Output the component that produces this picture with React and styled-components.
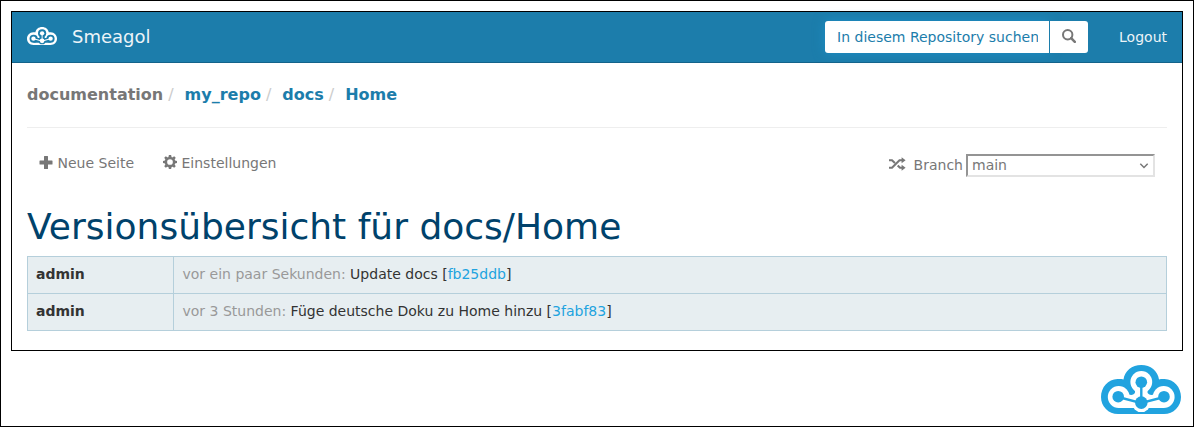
import React from 'react';
import styled, { createGlobalStyle } from 'styled-components';

const Global = createGlobalStyle`
  * { box-sizing: border-box; }
  body {
    margin: 0;
    background: #fff;
    color: #333;
    font: 14px/20px "DejaVu Sans", sans-serif;
  }
`;

const Page = styled.div`
  display: flex;
  flex-direction: column;
  width: 1194px;
  height: 427px;
  padding: 10px;
  border: 1px solid #000;
`;

const Frame = styled.section`
  width: 1172px;
  height: 340px;
  border: 1px solid #000;
`;

const Navbar = styled.header`
  display: flex;
  align-items: center;
  height: 51px;
  padding: 0 15px;
  background: #1c7dab;
  border-bottom: 1px solid #14638a;
  color: #ecf4f8;
`;

const Brand = styled.a`
  display: flex;
  align-items: center;
  gap: 15px;
  margin-right: auto;
  font-size: 18px;
  svg { margin-bottom: 2px; }
`;

const SearchForm = styled.div`
  display: flex;
  width: 263px;
  height: 32px;
  margin-right: 31px;
`;

const SearchInput = styled.input`
  width: 224px;
  padding: 0 11px 0 12px;
  border: 0;
  border-radius: 3px 0 0 3px;
  outline: 0;
  background: #fff;
  box-shadow: 0 0 12px rgba(30, 150, 210, 0.65);
  font: inherit;
  &::placeholder { color: #1c7dab; opacity: 1; }
`;

const SearchButton = styled.button`
  display: flex;
  flex: 1;
  align-items: center;
  justify-content: center;
  padding: 0 0 2px;
  border: 0;
  border-left: 1px solid #1c7dab;
  border-radius: 0 3px 3px 0;
  background: #fff;
  color: #777;
`;

const Content = styled.main`
  padding: 0 15px;
`;

const Breadcrumb = styled.nav`
  display: flex;
  height: 65px;
  padding-top: 21px;
  border-bottom: 1px solid #eee;
  font-size: 16px;
  line-height: 22px;
  font-weight: bold;
`;

const Crumb = styled.span`
  color: ${(p) => (p.$muted ? '#777' : '#1c7dab')};
  &:not(:first-child)::before {
    content: '/';
    padding: 0 11px 0 5px;
    color: #ccc;
    font-weight: normal;
  }
`;

const Toolbar = styled.div`
  display: flex;
  height: 77px;
  padding: 25px 12px 0 11.5px;
  color: #777;
`;

const Action = styled.a`
  display: flex;
  align-items: flex-start;
  gap: 5px;
  margin-right: 28.5px;
  svg { margin-top: 2px; }
`;

const BranchPicker = styled.label`
  display: flex;
  height: 25px;
  margin-left: auto;
`;

const BranchIcon = styled.span`
  display: flex;
  padding-top: 4px;
`;

const BranchName = styled.span`
  margin: 2px 3px 0 8px;
`;

const SelectWrap = styled.span`
  position: relative;
  height: 24px;
  padding-top: 1px;
  svg {
    position: absolute;
    top: 10px;
    right: 6px;
    pointer-events: none;
  }
`;

const BranchSelect = styled.select`
  display: block;
  width: 189px;
  height: 23px;
  padding: 0 4px 1px;
  border: 2px solid;
  border-color: #949494 #e3e3e3 #e3e3e3 #949494;
  border-radius: 0;
  appearance: none;
  background-color: #fff;
  color: #777;
  font: inherit;
  line-height: 18px;
`;

const Title = styled.h1`
  margin: 0;
  height: 51px;
  padding-top: 2px;
  color: #00426b;
  font-size: 36px;
  font-weight: normal;
  line-height: 40px;
`;

const History = styled.table`
  width: 1140px;
  border-collapse: collapse;
  table-layout: fixed;
  background: #e7eef1;
`;

const Cell = styled.td`
  width: ${(p) => (p.$author ? '146px' : 'auto')};
  height: 37px;
  padding: ${(p) => (p.$author ? '0 8px 3px' : '0 8px 3px 8.5px')};
  border: 1px solid #b5cfdb;
  font-weight: ${(p) => (p.$author ? 'bold' : 'normal')};
`;

const Time = styled.span`
  color: #999;
`;

const Commit = styled.a`
  color: #21a3df;
`;

const Footer = styled.footer`
  display: flex;
  justify-content: flex-end;
  padding: 14px 2px 0 0;
`;

const CloudLogo = ({ width, height, color, inner }) => (
  <svg width={width} height={height} viewBox="0 0 80 49" preserveAspectRatio="none">
    <path
      fill={color}
      d="M17 49C7.500 49 0 41.500 0 32C0 22.500 7 14.300 16.500 14.100C18.800 14 20.800 14.100 22.500 14.600C23.500 6 31 0 40.300 0C49.500 0 57 6 58 14.600C59.500 14.100 61.500 14 63.500 14.100C73 14.300 80 22.500 80 32C80 41.500 72.500 49 63 49Z"
    />
    <g fill={inner}>
      <circle cx="17.700" cy="32" r="10.900" />
      <circle cx="40.300" cy="17" r="10.900" />
      <circle cx="62.700" cy="32" r="10.900" />
      <circle cx="40.300" cy="37.800" r="9.300" />
      <path d="M17.500 42.900H63V40L54 36V29Q49 31 47 28.500Q45.500 26.500 48 23H32.500Q35 26.500 33.500 28.500Q31.500 31 26.500 29V36L17.500 40Z" />
    </g>
    <g fill={color}>
      <path d="M17.500 30.800L37 36V38.500L17 33.300ZM63 30.800L43 36V38.500L63.500 33.300ZM39.100 17H41.500V36H39.100Z" />
      <circle cx="17.200" cy="31.700" r="5.800" />
      <circle cx="40.300" cy="17.200" r="5.800" />
      <circle cx="63" cy="31.700" r="5.800" />
      <circle cx="40.300" cy="37.600" r="6.300" />
    </g>
  </svg>
);

const SearchIcon = () => (
  <svg width="14" height="14" viewBox="0 0 14 14" fill="none" stroke="currentColor">
    <circle cx="5.700" cy="5.700" r="4.700" strokeWidth="2" />
    <path d="M9.200 9.200L12.800 12.800" strokeWidth="2.500" strokeLinecap="round" />
  </svg>
);

const PlusIcon = () => (
  <svg width="14" height="14" viewBox="0 0 14 14" fill="currentColor">
    <path d="M5 1.500Q5 1 5.500 1H8.500Q9 1 9 1.500V5.500H13Q13.500 5.500 13.500 6V9Q13.500 9.500 13 9.500H9V13.500Q9 14 8.500 14H5.500Q5 14 5 13.500V9.500H1Q.5 9.500 .5 9V6Q.5 5.500 1 5.500H5Z" />
  </svg>
);

const CogIcon = () => (
  <svg width="14" height="14" viewBox="-7 -7 14 14">
    <circle r="4.100" fill="none" stroke="currentColor" strokeWidth="2.500" />
    {[0, 45, 90, 135, 180, 225, 270, 315].map((angle) => (
      <path key={angle} d="M-1.600 -4.800L-1.100 -7H1.100L1.600 -4.800Z" fill="currentColor" transform={`rotate(${angle})`} />
    ))}
  </svg>
);

const ShuffleIcon = () => (
  <svg width="17" height="14" viewBox="0 0 17 14" fill="none" stroke="currentColor" strokeWidth="2.100">
    <path d="M0 3.300H3L5.900 6M8.700 8.400L11 10.700H13M0 10.700H3L10.500 3.300H13" />
    <path d="M12.600 .3L16.600 3.300L12.600 6.300ZM12.600 7.700L16.600 10.700L12.600 13.700Z" fill="currentColor" stroke="none" />
  </svg>
);

const ChevronIcon = () => (
  <svg width="10" height="6" viewBox="0 0 10 6" fill="none" stroke="#777" strokeWidth="1.500">
    <path d="M1.300 .8L5 4.500L8.700 .8" />
  </svg>
);

const commits = [
  { author: 'admin', time: 'vor ein paar Sekunden:', message: 'Update docs', hash: 'fb25ddb' },
  { author: 'admin', time: 'vor 3 Stunden:', message: 'Füge deutsche Doku zu Home hinzu', hash: '3fabf83' },
];

export default function App() {
  return (
    <Page>
      <Global />
      <Frame>
        <Navbar>
          <Brand>
            <CloudLogo width={30} height={18} color="#fff" inner="#1c7dab" />
            Smeagol
          </Brand>
          <SearchForm>
            <SearchInput placeholder="In diesem Repository suchen" />
            <SearchButton><SearchIcon /></SearchButton>
          </SearchForm>
          <a>Logout</a>
        </Navbar>
        <Content>
          <Breadcrumb>
            <Crumb $muted>documentation</Crumb>
            <Crumb>my_repo</Crumb>
            <Crumb>docs</Crumb>
            <Crumb>Home</Crumb>
          </Breadcrumb>
          <Toolbar>
            <Action><PlusIcon />Neue Seite</Action>
            <Action><CogIcon />Einstellungen</Action>
            <BranchPicker>
              <BranchIcon><ShuffleIcon /></BranchIcon>
              <BranchName>Branch</BranchName>
              <SelectWrap>
                <BranchSelect defaultValue="main"><option>main</option></BranchSelect>
                <ChevronIcon />
              </SelectWrap>
            </BranchPicker>
          </Toolbar>
          <Title>Versionsübersicht für docs/Home</Title>
          <History>
            <tbody>
              {commits.map((c) => (
                <tr key={c.hash}>
                  <Cell $author>{c.author}</Cell>
                  <Cell><Time>{c.time}</Time> {c.message} [<Commit>{c.hash}</Commit>]</Cell>
                </tr>
              ))}
            </tbody>
          </History>
        </Content>
      </Frame>
      <Footer>
        <CloudLogo width={80} height={49} color="#21a3df" inner="#fff" />
      </Footer>
    </Page>
  );
}
